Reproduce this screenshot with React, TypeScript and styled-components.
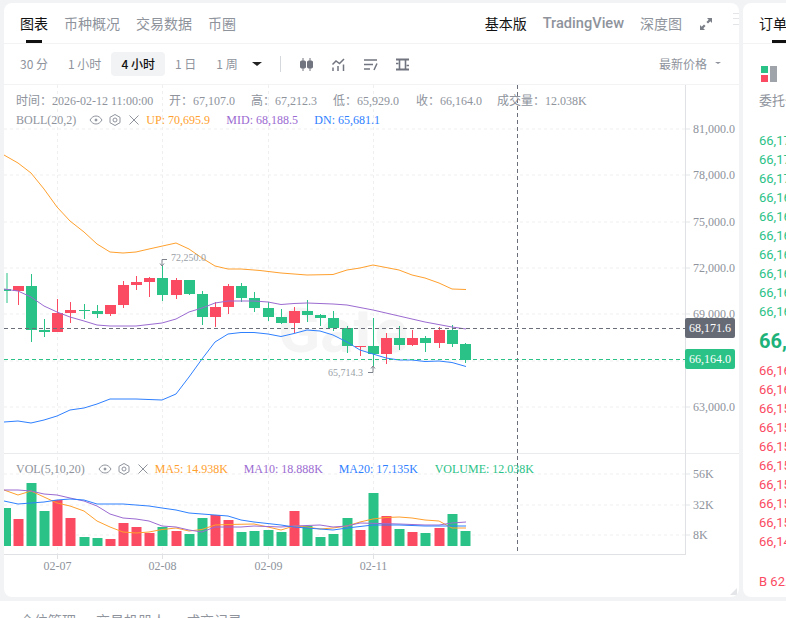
import { FC } from "react";
import styled, { createGlobalStyle } from "styled-components";

const GREEN = "#2bc287";
const RED = "#fa4b62";
const ORANGE = "#ffa02e";
const PURPLE = "#9b6bd1";
const BLUE = "#2f80ff";
const GREY = "#8e939c";
const SERIF = `"Liberation Serif", "Noto Sans CJK SC", serif`;
const SANS = `"Noto Sans CJK SC", "Noto Sans", sans-serif`;

const GlobalStyle = createGlobalStyle`
  html, body {
    margin: 0;
    padding: 0;
    width: 786px;
    height: 618px;
    overflow: hidden;
    background: #fff;
  }
`;

const Page = styled.div`
  width: 786px;
  height: 618px;
  overflow: hidden;
  font-family: ${SANS};
`;

const Workspace = styled.div`
  display: flex;
  gap: 4px;
  padding: 3px 0 4px 4px;
  background: #f1f3f5;
  width: 1100px;
`;

const Panel = styled.section<{ $width: number }>`
  position: relative;
  flex: none;
  width: ${(p) => p.$width}px;
  height: 594px;
  background: #fff;
  border-radius: 8px;
  overflow: hidden;
`;

const TabBar = styled.div`
  display: flex;
  align-items: center;
  height: 40px;
  padding: 0 26px 0 16px;
  border-bottom: 1px solid #f1f3f5;
`;

const Tabs = styled.div`
  display: flex;
  gap: 16px;
`;

const Tab = styled.div<{ $active?: boolean; $latin?: boolean }>`
  position: relative;
  height: 40px;
  line-height: 40px;
  font-size: 14px;
  white-space: nowrap;
  color: ${(p) => (p.$active ? "#111" : GREY)};
  font-family: ${(p) => (p.$latin ? `"Roboto", sans-serif` : SANS)};
  ${(p) => p.$latin && "font-size: 14.6px; font-weight: 500;"}
`;

const Underline = styled.i`
  position: absolute;
  left: 50%;
  bottom: 0;
  width: 16px;
  height: 3px;
  margin-left: -8px;
  background: #111;
`;

const RightTabs = styled(Tabs)`
  margin-left: auto;
  align-items: center;
`;

const ExpandIcon = styled.svg`
  width: 14px;
  height: 14px;
  margin: 1px 0 0 1px;
`;

const Gripper = styled.div`
  position: absolute;
  right: 0;
  top: 10px;
  width: 6px;
  height: 10px;
  border-top: 1px solid #e3e5e8;
  border-bottom: 1px solid #e3e5e8;
  &::after {
    content: "";
    display: block;
    margin-top: 4px;
    height: 1px;
    background: #e3e5e8;
  }
`;

const Toolbar = styled.div`
  display: flex;
  align-items: center;
  height: 40px;
  padding: 0 18px 0 6px;
  border-bottom: 1px solid #f1f3f5;
  font-size: 12px;
`;

const Interval = styled.div<{ $active?: boolean }>`
  height: 24px;
  line-height: 23px;
  padding: 0 10px;
  border-radius: 4px;
  white-space: nowrap;
  color: ${(p) => (p.$active ? "#111" : GREY)};
  background: ${(p) => (p.$active ? "#f1f3f5" : "transparent")};
  font-weight: ${(p) => (p.$active ? 500 : 400)};
`;

const Caret = styled.i<{ $size: number; $color: string; $gap?: number }>`
  flex: none;
  width: 0;
  height: 0;
  margin-left: ${(p) => p.$gap ?? 0}px;
  border-left: ${(p) => p.$size}px solid transparent;
  border-right: ${(p) => p.$size}px solid transparent;
  border-top: ${(p) => p.$size * 0.8}px solid ${(p) => p.$color};
`;

const ToolDivider = styled.i`
  width: 1px;
  height: 16px;
  margin: 0 18px;
  background: #d5d8dc;
`;

const ToolIcons = styled.div`
  display: flex;
  gap: 17px;
`;

const ToolIcon = styled.svg`
  display: block;
  width: 15px;
  height: 15px;
  fill: none;
  stroke: #71757f;
`;

const PriceType = styled.div`
  display: flex;
  align-items: center;
  gap: 8px;
  margin-left: auto;
  margin-top: -2px;
  color: ${GREY};
`;

const ChartPane = styled.div`
  position: relative;
  height: 512px;
`;

const ChartSvg = styled.svg`
  display: block;
  width: 735px;
  height: 512px;
`;

const AxisText = styled.text<{ $small?: boolean }>`
  font-family: ${SERIF};
  font-size: ${(p) => (p.$small ? 10 : 12)}px;
  fill: ${(p) => (p.$small ? "#9a9fa8" : GREY)};
`;

const TagText = styled(AxisText)`
  fill: #fff;
`;

const Legend = styled.div<{ $top: number }>`
  position: absolute;
  left: 12px;
  top: ${(p) => p.$top}px;
  display: flex;
  align-items: center;
  height: 16px;
  font-family: ${SERIF};
  font-size: 12px;
  white-space: nowrap;
  color: ${GREY};
`;

const LegendItem = styled.span<{ $color?: string; $width?: number }>`
  flex: none;
  color: ${(p) => p.$color ?? GREY};
  ${(p) => p.$width && `width: ${p.$width}px;`}
`;

const LegendIcons = styled.span`
  display: flex;
  align-items: center;
  gap: 5px;
  margin: 0 5px 0 13px;
`;

const LegendIcon = styled.svg`
  display: block;
  width: 14px;
  height: 14px;
  fill: none;
  stroke: #8e939c;
`;

const ResizeCorner = styled.i`
  position: absolute;
  right: 2px;
  bottom: 2px;
  width: 0;
  height: 0;
  border-left: 7px solid transparent;
  border-bottom: 7px solid #e3e5e8;
`;

const BookTab = styled.div`
  height: 40px;
  border-bottom: 1px solid #f1f3f5;
  padding-left: 16px;
  display: flex;
`;

const BookBody = styled.div`
  padding: 22px 16px 0 18px;
`;

const BookLegend = styled.div`
  display: grid;
  grid-template-columns: 7px 7px;
  grid-template-rows: 7px 7px;
  gap: 2px;
  width: 16px;
`;

const BookSwatch = styled.i<{ $color: string; $tall?: boolean }>`
  background: ${(p) => p.$color};
  ${(p) => p.$tall && "grid-column: 2; grid-row: 1 / span 2;"}
`;

const BookCaption = styled.div`
  margin: 8px 0 22px -2px;
  font-size: 13px;
  line-height: 19px;
  color: ${GREY};
`;

const BookRows = styled.div`
  margin-left: -2px;
`;

const BookRow = styled.div<{ $color: string }>`
  height: 19px;
  line-height: 19px;
  font-family: "Roboto", sans-serif;
  font-size: 13px;
  color: ${(p) => p.$color};
`;

const BookMid = styled.div`
  height: 40px;
  line-height: 40px;
  font-family: "Roboto", sans-serif;
  font-size: 20px;
  font-weight: 700;
  color: #1db27a;
`;

const BookFoot = styled(BookRow)`
  margin-top: 21px;
`;

const BottomTabs = styled.div`
  display: flex;
  gap: 20px;
  padding: 9px 0 0 20px;
  font-size: 14px;
  line-height: 20px;
  color: ${GREY};
`;

// [wickTop, wickBottom, bodyTop, bodyBottom, up, volumeTop]
const candles: [number, number, number, number, boolean, number][] = [
  [273, 303, 289, 291, true, 508],
  [286, 305, 286, 291, false, 519],
  [274, 342, 286, 330, true, 483],
  [319, 337, 330, 332, true, 511],
  [299, 332, 313, 332, false, 500],
  [302, 323, 310, 313, false, 518],
  [304, 319, 310, 311, true, 537],
  [305, 318, 311, 314, true, 538],
  [305, 316, 305, 314, false, 539],
  [281, 308, 285, 305, false, 523],
  [276, 290, 282, 285, false, 527],
  [277, 297, 278, 282, false, 533],
  [265, 301, 278, 295, true, 527],
  [278, 299, 280, 295, false, 531],
  [280, 295, 280, 294, true, 534],
  [291, 325, 294, 317, true, 518],
  [302, 327, 307, 317, false, 515],
  [284, 314, 286, 307, false, 520],
  [283, 302, 286, 298, true, 532],
  [292, 312, 298, 308, true, 531],
  [302, 321, 308, 317, true, 530],
  [309, 324, 317, 323, true, 532],
  [307, 333, 311, 323, false, 511],
  [300, 322, 311, 315, true, 526],
  [314, 326, 315, 318, true, 537],
  [311, 331, 318, 328, true, 534],
  [326, 353, 328, 346, true, 518],
  [346, 356, 346, 347, false, 530],
  [318, 366, 346, 354, true, 493],
  [333, 364, 338, 354, false, 516],
  [326, 350, 338, 345, true, 529],
  [330, 346, 338, 345, false, 532],
  [336, 352, 338, 343, true, 533],
  [327, 348, 330, 343, false, 528],
  [325, 347, 330, 344, true, 514],
  [343, 363, 344, 360, true, 531],
];

const centers = [
  7, 18.5, 31.5, 44.5, 57.5, 70.5, 84.5, 97.5, 110.5, 123.5, 136.5, 149.5, 162.5, 176.5, 189.5,
  202.5, 215.5, 228.5, 241.5, 254.5, 268.5, 281.5, 294.5, 307.5, 320.5, 333.5, 347.5, 360.5, 373.5,
  386.5, 399.5, 412.5, 425.5, 439.5, 452.5, 465.5,
];

const line = (raw: string) => raw.trim().replace(/\s+/g, " ");

const bollUp = line(`4,155 18,163 31,173 44,189 57,207 70,221 84,232 97,244 110,252 123,253 136,252
  149,249 176,243 189,249 202,258 215,266 228,269 241,269 254,270 260,270.5 281,273 307,275 333,274.5
  347,270 360,268 373,265 399,270 412,275 425,278 439,283 452,289 466,289.5`);
const bollMid = line(`4,289 18,291 31,297 44,306 57,312 70,317 84,321 97,325 110,326 136,326 162,323
  176,319 189,312 202,308 215,303 228,301 254,301 268,302 281,304.5 294,303.5 307,303 333,304 347,305
  373,310 399,316 425,322 452,327 466,329`);
const bollDn = line(`4,422 18,421 31,423 44,420 57,416 70,410 84,408 97,404 110,399 136,399 162,400
  176,394 189,377 202,359 215,342 228,334 241,332.5 254,332.5 268,334 281,336.5 294,333.5 307,330
  320,331 333,335 347,342 360,350 373,354 386,358 399,360 412,360 425,361.5 439,361 452,362.5 466,366.5`);
const volMa5 = line(`4,490 18,495 31,491 44,497 57,503 70,506 84,511 97,521 110,527 123,532 136,533
  149,532 162,529.5 176,528 189,531 202,529.5 215,525 228,524.5 254,524 268,527 281,530 294,526 307,527
  320,529 333,528 347,526 360,522 373,519 386,517.5 399,517 412,518 425,520 439,521 452,528 466,528`);
const volMa10 = line(`4,490 18,490 31,491 44,494 57,495 70,498 84,501 97,506 110,514 123,518 136,519
  149,521 162,526 176,527 189,530 202,532 215,527 241,527 254,526 281,527 294,526 320,525 333,527 347,526
  360,523 399,524 425,525 439,525 452,523 466,522`);
const volMa20 = line(`4,501 18,504 31,503 44,502 57,500 70,499 84,500 97,504 123,504 136,505 149,506
  162,508 176,510 189,513 202,514 215,515 228,516 241,520 254,522 281,525 294,527 307,528 333,530 347,528
  373,525 399,525 425,526 466,526`);

const Dashed: FC<{ x1: number; y1: number; x2: number; y2: number; color?: string; dash?: string }> = ({
  color = "#efefef",
  dash = "3 3",
  ...rest
}) => <line {...rest} stroke={color} strokeDasharray={dash} />;

const Trend: FC<{ points: string; color: string }> = ({ points, color }) => (
  <polyline points={points} fill="none" stroke={color} strokeWidth="1" strokeLinejoin="round" />
);

const IndicatorIcons: FC = () => (
  <LegendIcons>
    <LegendIcon viewBox="0 0 14 14">
      <path d="M1 7c1.6-2.6 3.6-4 6-4s4.4 1.4 6 4c-1.6 2.6-3.6 4-6 4S2.600 9.600 1 7z" />
      <circle cx="7" cy="7" r="1" fill="#8e939c" />
    </LegendIcon>
    <LegendIcon viewBox="0 0 14 14">
      <path d="M7 1.500 12 4.300v5.400L7 12.500 2 9.700V4.300z" />
      <circle cx="7" cy="7" r="2" />
    </LegendIcon>
    <LegendIcon viewBox="0 0 14 14">
      <path d="M2.500 2.500l9 9M11.500 2.500l-9 9" />
    </LegendIcon>
  </LegendIcons>
);

const Chart: FC = () => (
  <ChartSvg viewBox="4 85 735 512">
    {[129, 175, 222, 268, 314, 361, 407].map((y) => (
      <Dashed key={y} x1={4} y1={y} x2={685} y2={y} />
    ))}
    {[474, 505, 535].map((y) => (
      <Dashed key={y} x1={4} y1={y} x2={685} y2={y} />
    ))}
    {[57.5, 162.5, 268.5, 373.5].map((x) => (
      <Dashed key={x} x1={x} y1={85} x2={x} y2={554} />
    ))}

    <text x="278" y="352" fontFamily="Roboto, sans-serif" fontSize="62" fontWeight="700" fill="#f5f5f6">
      Gate
    </text>

    <line x1="4" y1="453.500" x2="739" y2="453.500" stroke="#e9ebed" />
    <line x1="4" y1="554.500" x2="685" y2="554.500" stroke="#dfe1e4" />
    <line x1="685.500" y1="85" x2="685.500" y2="555" stroke="#dfe1e4" />

    {candles.map(([wt, wb, bt, bb, up, vol], i) => {
      const c = centers[i];
      const color = up ? GREEN : RED;
      const left = i === 0 ? 4 : c - 5.5;
      const width = i === 0 ? 7 : 11;
      return (
        <g key={i} fill={color}>
          <rect x={c - 0.5} y={wt} width="1" height={wb - wt} />
          <rect x={left} y={bt} width={width} height={Math.max(bb - bt, 1)} />
          <rect x={i === 0 ? 4 : c - 5} y={vol} width={i === 0 ? 7 : 10} height={546 - vol} />
        </g>
      );
    })}

    <Trend points={bollUp} color={ORANGE} />
    <Trend points={bollMid} color={PURPLE} />
    <Trend points={bollDn} color={BLUE} />
    <Trend points={volMa5} color={ORANGE} />
    <Trend points={volMa10} color={PURPLE} />
    <Trend points={volMa20} color={BLUE} />

    <Dashed x1={4} y1={328.500} x2={685} y2={328.500} color="#6b6f7a" dash="4 3" />
    <Dashed x1={4} y1={359.500} x2={685} y2={359.500} color={GREEN} dash="4 3" />
    <Dashed x1={517.500} y1={85} x2={517.500} y2={554} color="#6b6f7a" dash="4 3" />

    <path d="M167 259.500h-5v6M160 263.500l2 2.500 2-2.500" fill="none" stroke="#7d828c" />
    <AxisText $small x="171" y="261">72,250.0</AxisText>
    <path d="M368 372.500h5v-6M371 368.500l2-2.500 2 2.500" fill="none" stroke="#7d828c" />
    <AxisText $small x="328" y="376">65,714.3</AxisText>

    {[
      [129, "81,000.0"],
      [175, "78,000.0"],
      [222, "75,000.0"],
      [268, "72,000.0"],
      [314, "69,000.0"],
      [407, "63,000.0"],
      [474, "56K"],
      [505, "32K"],
      [535, "8K"],
    ].map(([y, label]) => (
      <g key={label}>
        <line x1="686" y1={y} x2="690" y2={y} stroke="#e3e5e8" />
        <AxisText x="693" y={Number(y) + 4}>{label}</AxisText>
      </g>
    ))}

    <rect x="685" y="318" width="50" height="20" rx="2" fill="#666a75" />
    <TagText x="689" y="332">68,171.6</TagText>
    <rect x="685" y="349" width="50" height="20" rx="2" fill={GREEN} />
    <TagText x="689" y="363">66,164.0</TagText>

    {[
      [57.5, "02-07"],
      [162.5, "02-08"],
      [268.5, "02-09"],
      [373.5, "02-11"],
    ].map(([x, label]) => (
      <g key={label}>
        <line x1={x} y1="555" x2={x} y2="559" stroke="#dfe1e4" />
        <AxisText x={x} y="570" textAnchor="middle">{label}</AxisText>
      </g>
    ))}
  </ChartSvg>
);

const asks = ["66,175.5", "66,174.2", "66,172.8", "66,169.9", "66,168.4", "66,167.1", "66,166.5", "66,165.8", "66,165.0", "66,164.1"];
const bids = ["66,163.9", "66,161.2", "66,158.7", "66,156.3", "66,155.0", "66,153.4", "66,152.1", "66,150.8", "66,150.2", "66,149.6"];

const App: FC = () => (
  <Page>
    <GlobalStyle />
    <Workspace>
      <Panel $width={735}>
        <TabBar>
          <Tabs>
            <Tab $active>
              图表
              <Underline />
            </Tab>
            <Tab>币种概况</Tab>
            <Tab>交易数据</Tab>
            <Tab>币圈</Tab>
          </Tabs>
          <RightTabs>
            <Tab $active>基本版</Tab>
            <Tab $latin>TradingView</Tab>
            <Tab>深度图</Tab>
            <ExpandIcon viewBox="0 0 14 14">
              <path d="M8 1h5v5L11.300 4.300 9 6.600 7.400 5 9.700 2.700zM6 13H1V8l1.700 1.700L5 7.400 6.600 9 4.300 11.300z" fill="#7b7f88" />
            </ExpandIcon>
          </RightTabs>
          <Gripper />
        </TabBar>
        <Toolbar>
          <Interval>30 分</Interval>
          <Interval>1 小时</Interval>
          <Interval $active>4 小时</Interval>
          <Interval>1 日</Interval>
          <Interval>1 周</Interval>
          <Caret $size={5} $color="#222" $gap={4} />
          <ToolDivider />
          <ToolIcons>
            <ToolIcon viewBox="0 0 15 15">
              <path d="M4 1v13M11 1v13" />
              <rect x="1.500" y="4" width="5" height="7" rx="1" fill="#71757f" />
              <rect x="8.500" y="4" width="5" height="7" rx="1" fill="#71757f" />
            </ToolIcon>
            <ToolIcon viewBox="0 0 15 15" strokeWidth="1.500">
              <path d="M1.500 7.500 5 4l3.500 2.500L13 2" />
              <path d="M2 10.500V14M7 9v5M12.500 7.500V14" />
            </ToolIcon>
            <ToolIcon viewBox="0 0 15 15" strokeWidth="1.500">
              <path d="M1 3h13M1 7.500h9M1 12h6M14 6.500 11 13" />
            </ToolIcon>
            <ToolIcon viewBox="0 0 15 15" strokeWidth="2">
              <path d="M1 2.500h13M1 12.500h13" />
              <path d="M4.500 2.500c0 3 0 7 0 10M10.500 2.500c0 3 0 7 0 10" strokeWidth="1.600" />
              <path d="M1 6.500h2.500M11.500 8.500H14" strokeWidth="1.500" />
            </ToolIcon>
          </ToolIcons>
          <PriceType>
            最新价格
            <Caret $size={3} $color="#8e939c" />
          </PriceType>
        </Toolbar>
        <ChartPane>
          <Chart />
          <Legend $top={7}>
            <LegendItem $width={153}>时间：2026-02-12 11:00:00</LegendItem>
            <LegendItem $width={82}>开：67,107.0</LegendItem>
            <LegendItem $width={82}>高：67,212.3</LegendItem>
            <LegendItem $width={83}>低：65,929.0</LegendItem>
            <LegendItem $width={81}>收：66,164.0</LegendItem>
            <LegendItem>成交量：12.038K</LegendItem>
          </Legend>
          <Legend $top={27}>
            <LegendItem>BOLL(20,2)</LegendItem>
            <IndicatorIcons />
            <LegendItem $color={ORANGE} $width={80}>UP: 70,695.9</LegendItem>
            <LegendItem $color={PURPLE} $width={88}>MID: 68,188.5</LegendItem>
            <LegendItem $color={BLUE}>DN: 65,681.1</LegendItem>
          </Legend>
          <Legend $top={376}>
            <LegendItem>VOL(5,10,20)</LegendItem>
            <IndicatorIcons />
            <LegendItem $color={ORANGE} $width={89}>MA5: 14.938K</LegendItem>
            <LegendItem $color={PURPLE} $width={95}>MA10: 18.888K</LegendItem>
            <LegendItem $color={BLUE} $width={96}>MA20: 17.135K</LegendItem>
            <LegendItem $color={GREEN}>VOLUME: 12.038K</LegendItem>
          </Legend>
        </ChartPane>
        <ResizeCorner />
      </Panel>
      <Panel $width={300}>
        <BookTab>
          <Tab $active>
            订单簿
            <Underline />
          </Tab>
        </BookTab>
        <BookBody>
          <BookLegend>
            <BookSwatch $color={GREEN} />
            <BookSwatch $color="#9fa3aa" $tall />
            <BookSwatch $color={RED} />
          </BookLegend>
          <BookCaption>委托价格</BookCaption>
          <BookRows>
            {asks.map((p) => (
              <BookRow key={p} $color={GREEN}>{p}</BookRow>
            ))}
            <BookMid>66,164.0</BookMid>
            {bids.map((p) => (
              <BookRow key={p} $color={RED}>{p}</BookRow>
            ))}
            <BookFoot $color={RED}>B 62.5%</BookFoot>
          </BookRows>
        </BookBody>
      </Panel>
    </Workspace>
    <BottomTabs>
      <span>仓位管理</span>
      <span>交易机器人</span>
      <span>成交记录</span>
    </BottomTabs>
  </Page>
);

export default App;
